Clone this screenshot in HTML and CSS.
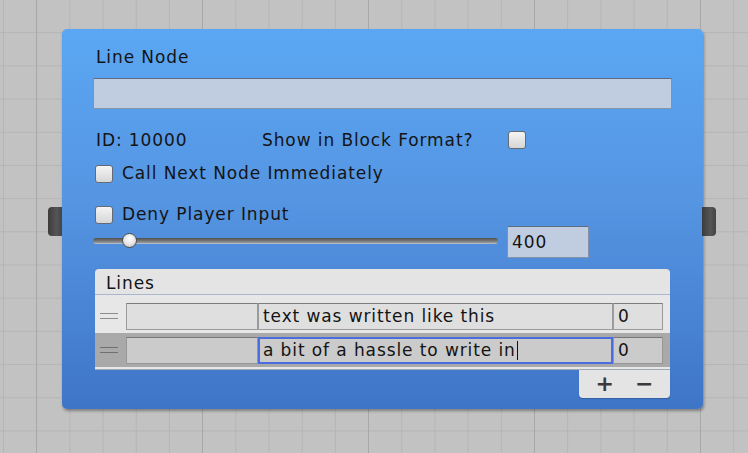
FILE: index.html
```html
<!DOCTYPE html>
<html lang="en">
<head>
    <meta charset="UTF-8">
    <title>Line Node</title>
    <link rel="stylesheet" href="styles.css">
</head>
<body>
    <!-- Node canvas -->
    <div class="node">
        <div class="port port-in"></div>
        <div class="port port-out"></div>

        <div class="title">Line Node</div>
        <div class="field wide"></div>

        <div class="row id-row">
            <span class="label id-label">ID: 10000</span>
            <span class="label block-label">Show in Block Format?</span>
            <span class="check"></span>
        </div>

        <div class="row toggle call-row">
            <span class="check"></span>
            <span class="label">Call Next Node Immediately</span>
        </div>

        <div class="row toggle deny-row">
            <span class="check"></span>
            <span class="label">Deny Player Input</span>
        </div>

        <div class="row slider-row">
            <div class="slider">
                <div class="track"></div>
                <div class="thumb" style="left: 29px"></div>
            </div>
            <div class="field num">400</div>
        </div>

        <!-- Reorderable list -->
        <div class="list">
            <div class="list-head">Lines</div>
            <div class="list-body">
                <div class="item">
                    <span class="handle"></span>
                    <span class="cell key"></span>
                    <span class="cell text">text was written like this</span>
                    <span class="cell count">0</span>
                </div>
                <div class="item selected">
                    <span class="handle"></span>
                    <span class="cell key"></span>
                    <span class="cell text focused">a bit of a hassle to write in<span class="caret"></span></span>
                    <span class="cell count">0</span>
                </div>
            </div>
            <div class="list-foot">
                <span class="foot-btn">+</span>
                <span class="foot-btn">&minus;</span>
            </div>
        </div>
    </div>
</body>
</html>
```

FILE: styles.css
```css
html, body {
    margin: 0;
    padding: 0;
}

body {
    width: 748px;
    height: 453px;
    overflow: hidden;
    font-family: 'DejaVu Sans', 'Liberation Sans', sans-serif;
    font-size: 17px;
    letter-spacing: 0.9px;
    color: #141414;
    background-color: #c2c2c2;
    background-image:
        linear-gradient(to right, #a8a8a8 1px, transparent 1px),
        linear-gradient(to right, #b5b5b5 1px, transparent 1px),
        linear-gradient(to bottom, #b5b5b5 1px, transparent 1px);
    background-size: 166px 100%, 33.2px 33.2px, 33.2px 33.2px;
    background-position: 36px 0, 3px 0, 0 -1px;
    display: flow-root;
}

.node {
    position: relative;
    box-sizing: border-box;
    width: 641px;
    height: 380px;
    margin: 29px 0 0 62px;
    padding: 17px 31px 0;
    border-radius: 5px;
    background: linear-gradient(to bottom, #5ba7f3 0%, #5595e2 45%, #3f75c7 100%);
    box-shadow: 1px 2px 3px rgba(0, 0, 0, 0.35);
}

.port {
    position: absolute;
    top: 178px;
    width: 14px;
    height: 29px;
    background: linear-gradient(to right, #3c3c3c, #555 60%, #444);
}

.port-in {
    left: -14px;
    border-radius: 4px 0 0 4px;
}

.port-out {
    right: -13px;
    border-radius: 0 4px 4px 0;
}

.title {
    line-height: 20px;
    padding-left: 3px;
    height: 20px;
    margin-top: 1px;
}

.field {
    box-sizing: border-box;
    background: #c0cde0;
    border: 1px solid #8392a8;
    border-top-color: #5e6b80;
    line-height: 30px;
    padding-left: 4px;
}

.wide {
    margin-top: 11px;
    height: 31px;
}

.row {
    display: flex;
    align-items: center;
    height: 20px;
    line-height: 20px;
}

.label {
    padding-left: 3px;
    white-space: nowrap;
}

.id-row {
    margin-top: 21px;
}

.id-label {
    width: 163px;
}

.block-label {
    width: 246px;
}

.check {
    box-sizing: border-box;
    width: 18px;
    height: 18px;
    flex: none;
    border: 1px solid #656b75;
    border-radius: 3px;
    background: linear-gradient(to bottom, #f4f4f4, #d6d6d6);
}

.toggle .check {
    margin: 2px 9px 0 2px;
}

.toggle .label {
    padding-left: 0;
}

.call-row {
    margin-top: 13px;
}

.deny-row {
    margin-top: 21px;
}

.slider-row {
    margin-top: 2px;
    height: 32px;
}

.slider {
    position: relative;
    width: 405px;
    height: 32px;
    margin-right: 9px;
}

.track {
    position: absolute;
    left: 0;
    right: 0;
    top: 12px;
    height: 6px;
    border-radius: 3px;
    background: linear-gradient(to bottom, #4f4f4f, #8a8a8a 70%, #b9c9e0);
}

.thumb {
    position: absolute;
    top: 7px;
    width: 15px;
    height: 15px;
    box-sizing: border-box;
    border-radius: 50%;
    border: 1px solid #4d4d4d;
    background: radial-gradient(circle at 50% 35%, #ffffff, #e4e4e4 55%, #b4b4b4);
}

.num {
    width: 82px;
    height: 32px;
}

.list {
    margin: 11px 2px 0;
}

.list-head {
    height: 26px;
    line-height: 20px;
    padding: 4px 11px 0;
    box-sizing: border-box;
    background: #e4e4e4;
    border-radius: 4px 4px 0 0;
    border-bottom: 1px solid #a9b8ce;
}

.list-body {
    background: #e7e7e7;
    padding: 4px 0 2px;
    border-bottom: 1px solid #9fa8b4;
}

.item {
    display: flex;
    align-items: center;
    height: 34px;
    padding-right: 7px;
}

.item.selected {
    background: #a9a9a9;
}

.handle {
    width: 18px;
    height: 6px;
    margin: 0 8px 0 5px;
    border-top: 1px solid #8c8c8c;
    border-bottom: 1px solid #8c8c8c;
    box-sizing: border-box;
}

.selected .handle {
    border-color: #6f6f6f;
}

.cell {
    box-sizing: border-box;
    height: 27px;
    line-height: 25px;
    padding-left: 4px;
    background: #dfdfdf;
    border: 1px solid #9b9b9b;
    border-top-color: #7c7c7c;
    white-space: nowrap;
    overflow: hidden;
}

.selected .cell {
    background: #cbcbcb;
    border-color: #969696;
    border-top-color: #777;
}

.key {
    width: 132px;
}

.text {
    width: 355px;
}

.count {
    width: 50px;
}

.selected .cell.focused {
    border: 2px solid #4a6ee0;
    line-height: 23px;
    padding-left: 3px;
}

.caret {
    display: inline-block;
    width: 0;
    height: 19px;
    border-left: 1px solid #111;
    vertical-align: -4px;
    margin-left: 1px;
}

.list-foot {
    display: flex;
    justify-content: space-around;
    align-items: center;
    width: 91px;
    height: 28px;
    margin-left: auto;
    background: #e4e4e4;
    border-radius: 0 0 4px 4px;
    box-shadow: 0 1px 1px rgba(0, 0, 0, 0.2);
    padding: 0 6px;
    box-sizing: border-box;
}

.foot-btn {
    font-size: 22px;
    font-weight: bold;
    color: #3a3a3a;
    letter-spacing: 0;
    line-height: 28px;
    width: 30px;
    text-align: center;
}
```
